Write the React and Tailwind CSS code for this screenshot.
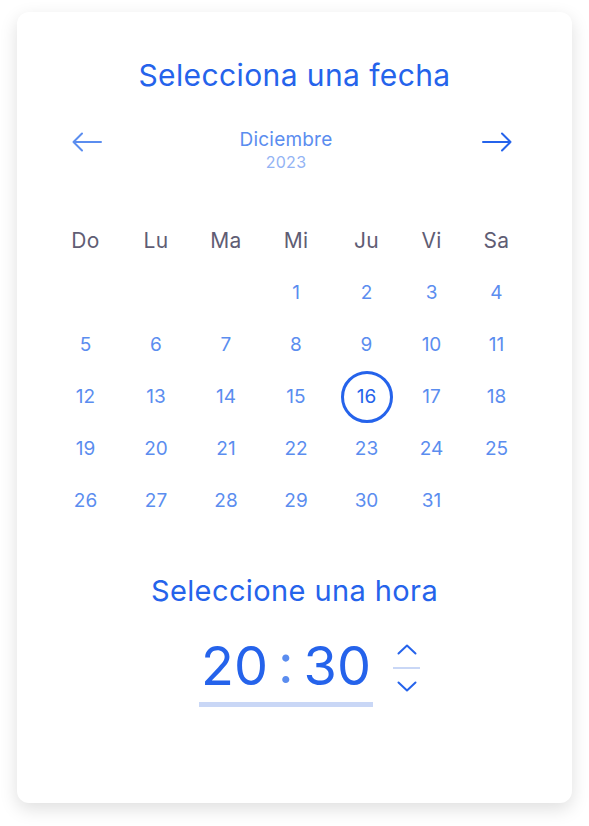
import React, { useState } from "react";

const DAYS = ["Do", "Lu", "Ma", "Mi", "Ju", "Vi", "Sa"];

// December 2023 grid, first day falls under "Mi"
const CELLS = [
  null, null, null, 1, 2, 3, 4,
  5, 6, 7, 8, 9, 10, 11,
  12, 13, 14, 15, 16, 17, 18,
  19, 20, 21, 22, 23, 24, 25,
  26, 27, 28, 29, 30, 31, null,
];

function Arrow({ dir }) {
  return (
    <svg width="30" height="20" viewBox="0 0 30 20" fill="none">
      {dir === "left" ? (
        <path d="M29 10H1.5M10 1.5L1.5 10L10 18.5" stroke="currentColor" strokeWidth="2" strokeLinecap="round" strokeLinejoin="round" />
      ) : (
        <path d="M1 10H28.5M20 1.5L28.5 10L20 18.5" stroke="currentColor" strokeWidth="2" strokeLinecap="round" strokeLinejoin="round" />
      )}
    </svg>
  );
}

function Chevron({ up }) {
  return (
    <svg width="20" height="11" viewBox="0 0 20 11" fill="none">
      <path
        d={up ? "M1.5 9.5L10 1.5L18.5 9.5" : "M1.5 1.5L10 9.5L18.5 1.5"}
        stroke="currentColor"
        strokeWidth="2"
        strokeLinecap="round"
        strokeLinejoin="round"
      />
    </svg>
  );
}

export default function App() {
  const [selected, setSelected] = useState(16);

  return (
    <div className="min-h-[826px] bg-white pt-[12px] pl-[17px] font-['Inter','Noto_Sans',sans-serif]">
      <div className="w-[555px] h-[791px] bg-white rounded-[12px] shadow-[0_6px_18px_rgba(0,0,0,0.13)] pt-[45px]">
        {/* title */}
        <h1 className="text-center text-[30px] leading-[36px] text-[#2563eb] tracking-[0.4px]">
          Selecciona una fecha
        </h1>

        {/* month nav */}
        <div className="flex items-start mt-[36px] pl-[55px] pr-[60px]">
          <button className="mt-[3px] text-[#5b8def]">
            <Arrow dir="left" />
          </button>
          <div className="flex-1 text-center pr-[12px]">
            <div className="text-[19px] leading-[22px] text-[#5b8def] tracking-[0.2px]">Diciembre</div>
            <div className="text-[16px] leading-[22px] text-[#93b3f4] tracking-[0.3px]">2023</div>
          </div>
          <button className="mt-[3px] text-[#2563eb]">
            <Arrow dir="right" />
          </button>
        </div>

        {/* calendar */}
        <div className="mt-[42px] ml-[33px] grid grid-cols-[71px_70px_70px_70px_71px_59px_71px]">
          {DAYS.map((d) => (
            <div key={d} className="h-[52px] flex items-center justify-center text-[21px] text-[#5f5d74] tracking-[0.3px]">
              {d}
            </div>
          ))}
          {CELLS.map((n, i) => (
            <div key={i} className="h-[52px] flex items-center justify-center">
              {n && (
                <button
                  onClick={() => setSelected(n)}
                  className={`w-[52px] h-[52px] rounded-full flex items-center justify-center text-[19px] ${
                    n === selected
                      ? "border-[3px] border-[#2563eb] text-[#2563eb]"
                      : "text-[#5b8def]"
                  }`}
                >
                  {n}
                </button>
              )}
            </div>
          ))}
        </div>

        {/* time */}
        <h2 className="mt-[47px] text-center text-[29px] leading-[34px] text-[#2563eb] tracking-[0.4px]">
          Seleccione una hora
        </h2>

        <div className="mt-[26px] ml-[182px] flex items-center">
          <div className="w-[174px] flex flex-col">
            <div className="flex items-center justify-between px-[2px] text-[54px] leading-[64px] text-[#2563eb]">
              <span>20</span>
              <span className="text-[#5b8def] -mt-[4px]">:</span>
              <span>30</span>
            </div>
            <div className="mt-[4px] h-[5px] bg-[#c9d7f6]" />
          </div>
          <div className="ml-[20px] -mt-[6px] flex flex-col items-center text-[#2563eb]">
            <Chevron up />
            <div className="my-[12px] w-[27px] h-[2px] bg-[#c9d7f6]" />
            <Chevron />
          </div>
        </div>
      </div>
    </div>
  );
}
